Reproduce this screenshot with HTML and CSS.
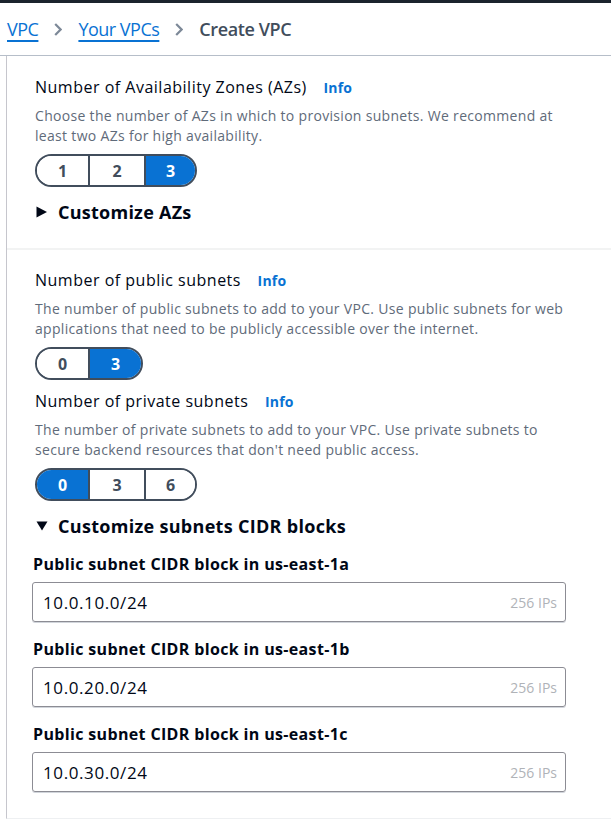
FILE: index.html
```html
<!DOCTYPE html>
<html>
<head>
<meta charset="utf-8">
<link rel="stylesheet" href="styles.css">
</head>
<body>
<div class="topbar"></div>
<nav class="crumbs">
  <a class="crumb-link" href="#">VPC</a>
  <svg class="chev" width="8" height="13" viewBox="0 0 8 13"><path d="M1.2 1 L6.6 6.5 L1.2 12" fill="none" stroke="#7d8998" stroke-width="2.2"/></svg>
  <a class="crumb-link" href="#">Your VPCs</a>
  <svg class="chev" width="8" height="13" viewBox="0 0 8 13"><path d="M1.2 1 L6.6 6.5 L1.2 12" fill="none" stroke="#7d8998" stroke-width="2.2"/></svg>
  <span class="crumb-current">Create VPC</span>
</nav>
<main class="panel">
  <section class="section first">
    <div class="field-label">Number of Availability Zones (AZs) <span class="info">Info</span></div>
    <p class="desc">Choose the number of AZs in which to provision subnets. We recommend at least two AZs for high availability.</p>
    <div class="seg">
      <span class="seg-item w1">1</span>
      <span class="seg-item w2">2</span>
      <span class="seg-item w3 on">3</span>
    </div>
    <div class="expander">
      <svg class="tri" width="12" height="12" viewBox="0 0 12 12"><path d="M0.5 0.5 L11 6 L0.5 11.5 Z" fill="#000716"/></svg>
      <span class="exp-text">Customize AZs</span>
    </div>
  </section>
  <section class="section second">
    <div class="field-label">Number of public subnets <span class="info">Info</span></div>
    <p class="desc">The number of public subnets to add to your VPC. Use public subnets for web applications that need to be publicly accessible over the internet.</p>
    <div class="seg">
      <span class="seg-item w1">0</span>
      <span class="seg-item w2b on">3</span>
    </div>
    <div class="field-label gap-top">Number of private subnets <span class="info">Info</span></div>
    <p class="desc">The number of private subnets to add to your VPC. Use private subnets to secure backend resources that don't need public access.</p>
    <div class="seg">
      <span class="seg-item w1 on">0</span>
      <span class="seg-item w2">3</span>
      <span class="seg-item w3">6</span>
    </div>
    <div class="expander open">
      <svg class="tri" width="12" height="12" viewBox="0 0 12 12"><path d="M0.5 1.5 L11.5 1.5 L6 10.5 Z" fill="#000716"/></svg>
      <span class="exp-text wide">Customize subnets CIDR blocks</span>
    </div>
    <div class="cidr">
      <div class="cidr-label">Public subnet CIDR block in us-east-1a</div>
      <div class="input"><span class="val">10.0.10.0/24</span><span class="hint">256 IPs</span></div>
      <div class="cidr-label">Public subnet CIDR block in us-east-1b</div>
      <div class="input"><span class="val">10.0.20.0/24</span><span class="hint">256 IPs</span></div>
      <div class="cidr-label">Public subnet CIDR block in us-east-1c</div>
      <div class="input"><span class="val">10.0.30.0/24</span><span class="hint">256 IPs</span></div>
    </div>
  </section>
</main>
</body>
</html>
```
FILE: styles.css
```css
html, body {
  margin: 0;
  padding: 0;
  background: #ffffff;
  font-family: "Open Sans", "Noto Sans", sans-serif;
  color: #000716;
  overflow: hidden;
}
.topbar {
  height: 3px;
  background: #1b232d;
}
.crumbs {
  height: 53px;
  border-bottom: 1px solid #b6bec9;
  display: flex;
  align-items: center;
  padding-left: 7px;
  font-size: 18px;
  box-sizing: border-box;
}
.crumb-link {
  color: #0972d3;
  text-decoration: underline;
  text-underline-offset: 4px;
  text-decoration-thickness: 1.5px;
  letter-spacing: -0.5px;
}
.chev {
  margin: 0 16px 0 16px;
  display: block;
}
.crumb-current {
  color: #414d5c;
  font-weight: 600;
  letter-spacing: -0.4px;
}
.panel {
  margin-left: 6px;
  border-left: 1px solid #c6c6cd;
  height: 762px;
  border-bottom: 1px solid #eef0f2;
}
.section {
  padding-left: 28px;
}
.section.first {
  padding-top: 20px;
  padding-bottom: 24px;
  border-bottom: 2px solid #f2f3f3;
}
.section.second {
  padding-top: 19px;
}
.field-label {
  font-size: 16px;
  line-height: 22px;
  letter-spacing: 0.5px;
}
.field-label.gap-top {
  margin-top: 10px;
}
.info {
  color: #0972d3;
  font-weight: 700;
  font-size: 14px;
  margin-left: 12px;
  letter-spacing: 0.2px;
}
.desc {
  margin: 7px 0 8px 0;
  font-size: 14px;
  line-height: 20px;
  color: #5f6b7a;
  max-width: 540px;
  letter-spacing: 0.31px;
}
.seg {
  display: inline-flex;
  border: 2px solid #414d5c;
  border-radius: 17px;
  overflow: hidden;
  height: 29px;
  vertical-align: top;
}
.seg-item {
  display: flex;
  align-items: center;
  justify-content: center;
  font-weight: 700;
  font-size: 16px;
  color: #414d5c;
  background: #ffffff;
}
.seg-item + .seg-item {
  border-left: 2px solid #414d5c;
}
.seg-item.on {
  background: #0972d3;
  color: #ffffff;
}
.w1 { width: 51px; }
.w2 { width: 54px; }
.w2b { width: 51px; }
.w3 { width: 49px; }
.expander {
  display: flex;
  align-items: center;
  margin-top: 13px;
  font-size: 18px;
  line-height: 24px;
  font-weight: 700;
}
.exp-text {
  letter-spacing: 0.25px;
}
.exp-text.wide {
  letter-spacing: 0.3px;
}
.expander.open {
  margin-top: 13px;
}
.tri {
  margin-left: 1px;
  margin-right: 10px;
  display: block;
}
.cidr {
  margin-left: -3px;
  width: 534px;
}
.cidr-label {
  margin-left: 1px;
  margin-top: 15px;
  font-size: 16px;
  line-height: 22px;
  font-weight: 700;
  letter-spacing: 0.35px;
}
.input {
  margin-top: 7px;
  height: 38px;
  border: 1px solid #8c8c94;
  border-radius: 3px;
  box-shadow: 0 1px 0 #d1d5db;
  display: flex;
  align-items: center;
  justify-content: space-between;
  padding: 0 8px 0 10px;
}
.input + .cidr-label {
  margin-top: 16px;
}
.val {
  font-size: 17px;
  color: #000716;
  letter-spacing: 0.6px;
}
.hint {
  font-size: 14px;
  color: #b0b3b8;
}
```
